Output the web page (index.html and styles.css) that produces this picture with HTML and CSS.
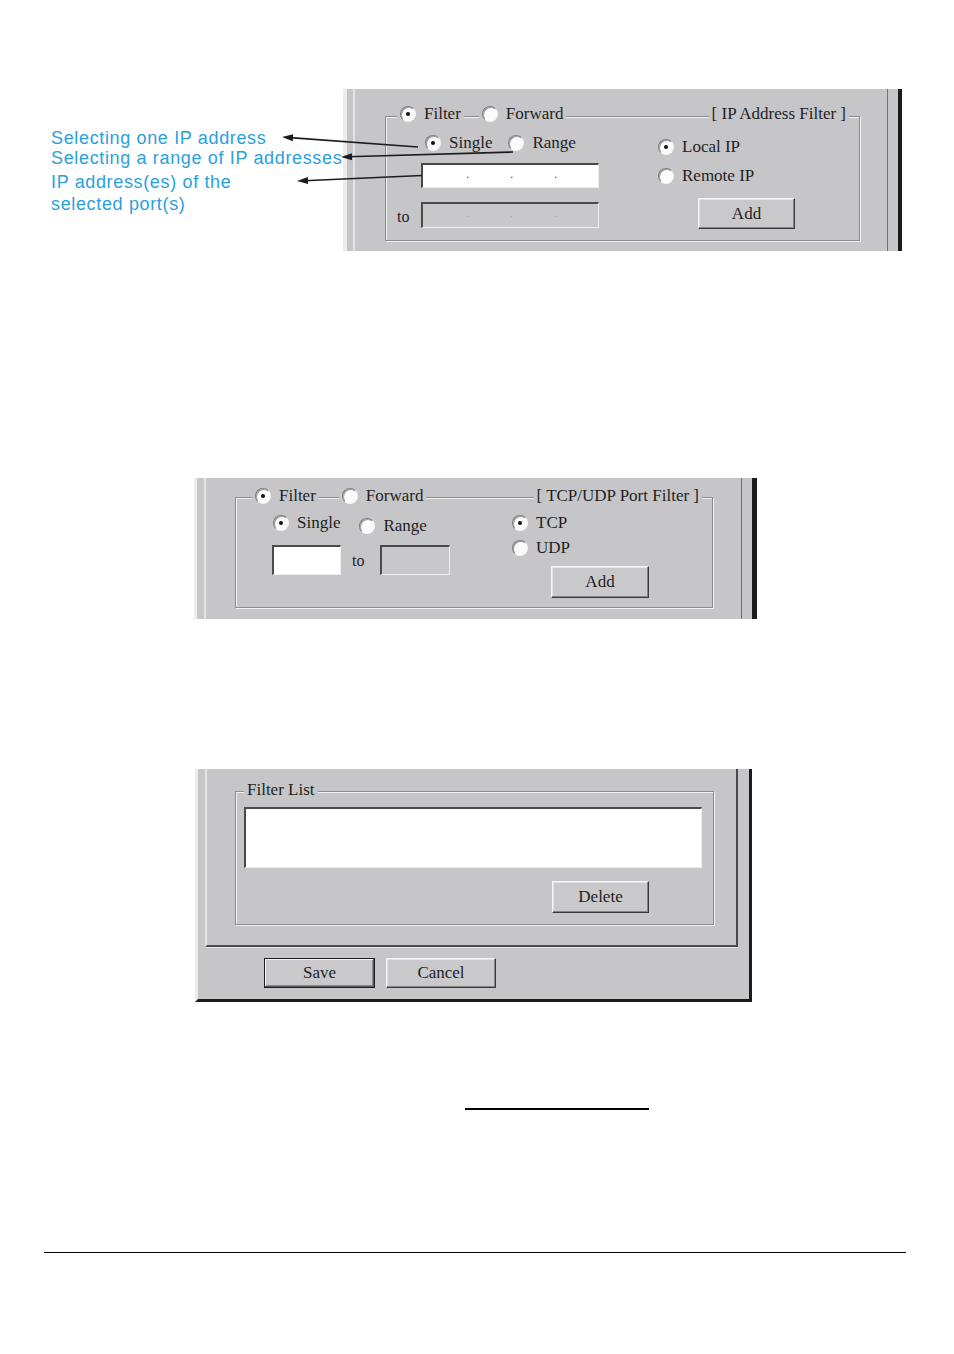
FILE: index.html
```html
<!DOCTYPE html>
<html>
<head>
<meta charset="utf-8">
<link rel="stylesheet" href="styles.css">
</head>
<body>
<div class="page">
  <svg class="arrows" width="954" height="260" viewBox="0 0 954 260">
    <line x1="418" y1="147" x2="290" y2="137.6" />
    <polygon points="282,137 293.2,134.3 292.7,141.3" />
    <line x1="513" y1="152" x2="348" y2="156.8" />
    <polygon points="341,157 352.1,160.2 351.9,153.2" />
    <line x1="422" y1="175.5" x2="304" y2="180.7" />
    <polygon points="297,181 308.1,184.1 307.9,177.1" />
  </svg>

  <section class="row1">
    <div class="notes">
      <p class="note">Selecting one IP address</p>
      <p class="note">Selecting a range of IP addresses</p>
      <p class="note note-multi">IP address(es) of the<br>selected port(s)</p>
    </div>
    <div class="shot shot1">
      <div class="panel panel1">
        <div class="gb gb1">
          <div class="gb-head">
            <span class="opt opt-first1"><i class="radio on"></i>Filter</span>
            <span class="opt opt-second1"><i class="radio"></i>Forward</span>
            <span class="gb-title">[ IP Address Filter ]</span>
          </div>
          <div class="gb-body">
            <div class="col-left1">
              <div class="line radios1">
                <span class="opt-in"><i class="radio on"></i>Single</span>
                <span class="opt-in range1"><i class="radio"></i>Range</span>
              </div>
              <div class="ipbox ip1"><span>.</span><span>.</span><span>.</span></div>
              <div class="torow1">
                <span class="tolabel1">to</span>
                <div class="ipbox ip2 disabled"><span>.</span><span>.</span><span>.</span></div>
              </div>
            </div>
            <div class="col-right1">
              <div class="line local"><span class="opt-in"><i class="radio on"></i>Local IP</span></div>
              <div class="line remote"><span class="opt-in"><i class="radio"></i>Remote IP</span></div>
              <div class="btn add1">Add</div>
            </div>
          </div>
        </div>
      </div>
    </div>
  </section>

  <section class="shot shot2">
    <div class="panel panel2">
      <div class="gb gb2">
        <div class="gb-head">
          <span class="opt opt-first2"><i class="radio on"></i>Filter</span>
          <span class="opt opt-second2"><i class="radio"></i>Forward</span>
          <span class="gb-title">[ TCP/UDP Port Filter ]</span>
        </div>
        <div class="gb-body">
          <div class="col-left2">
            <div class="line radios2">
              <span class="opt-in"><i class="radio on"></i>Single</span>
              <span class="opt-in range2"><i class="radio"></i>Range</span>
            </div>
            <div class="portrow">
              <div class="ipbox port1"></div>
              <span class="tolabel2">to</span>
              <div class="ipbox port2 disabled"></div>
            </div>
          </div>
          <div class="col-right2">
            <div class="line tcp"><span class="opt-in"><i class="radio on"></i>TCP</span></div>
            <div class="line udp"><span class="opt-in"><i class="radio"></i>UDP</span></div>
            <div class="btn add2">Add</div>
          </div>
        </div>
      </div>
    </div>
  </section>

  <section class="shot shot3">
    <div class="panel panel3">
      <div class="gb gb3">
        <div class="gb-head">
          <span class="gb-label">Filter List</span>
        </div>
        <div class="listbox"></div>
        <div class="btn delete">Delete</div>
      </div>
    </div>
    <div class="actions">
      <div class="btn save">Save</div>
      <div class="btn cancel">Cancel</div>
    </div>
  </section>

  <div class="rule-short"></div>
  <div class="rule-foot"></div>
</div>
</body>
</html>
```

FILE: styles.css
```css
* { box-sizing: border-box; }

html, body {
  margin: 0;
  padding: 0;
  background: #ffffff;
}

.page {
  position: relative;
  width: 954px;
  height: 1354px;
  padding-top: 89px;
  font-family: "Liberation Serif", "DejaVu Serif", serif;
  color: #1f1f1f;
}

.arrows {
  position: absolute;
  left: 0;
  top: 0;
  pointer-events: none;
  z-index: 5;
}
.arrows line { stroke: #1c1c1c; stroke-width: 1.6; }
.arrows polygon { fill: #1c1c1c; }

/* ---------- row 1 ---------- */
.row1 {
  display: flex;
  align-items: flex-start;
}

.notes {
  flex: 0 0 343px;
  padding-left: 51px;
  padding-top: 39px;
  font-family: "Liberation Sans", Arial, sans-serif;
  color: #2b9fdd;
  font-size: 18px;
  letter-spacing: 0.65px;
}
.note {
  margin: 0;
  line-height: 20px;
  white-space: nowrap;
}
.note-multi {
  margin-top: 3px;
  line-height: 22px;
}

/* ---------- common shot / window bits ---------- */
.shot {
  display: flex;
  background: #c6c6c8;
  font-size: 17px;
}

.panel {
  border-left: 2px solid #e4e4e6;
  border-right: 1px solid #707072;
}

.gb {
  border: 1px solid #8c8c8e;
  box-shadow: inset 1px 1px 0 #f2f2f2, 1px 1px 0 #f2f2f2;
}

.gb-head {
  display: flex;
  align-items: center;
  height: 20px;
}

.opt, .gb-title, .gb-label {
  display: flex;
  align-items: center;
  gap: 8px;
  background: #c6c6c8;
  padding: 0 3px;
  white-space: nowrap;
  line-height: 20px;
}
.gb-title {
  margin-left: auto;
  margin-right: 10px;
}

.gb-body { display: flex; }

.line {
  display: flex;
  align-items: center;
  height: 20px;
}
.opt-in {
  display: flex;
  align-items: center;
  gap: 8px;
  white-space: nowrap;
}

.radio {
  position: relative;
  display: block;
  flex: 0 0 auto;
  width: 16px;
  height: 16px;
  border-radius: 50%;
  background: #fbfbfb;
  border: 1px solid;
  border-color: #7c7c7e #f4f4f4 #f4f4f4 #7c7c7e;
  box-shadow: inset 1px 1px 0 #9e9ea0;
}
.radio.on::after {
  content: "";
  position: absolute;
  left: 5px;
  top: 5px;
  width: 4px;
  height: 4px;
  border-radius: 50%;
  background: #111;
}

.ipbox {
  display: flex;
  background: #ffffff;
  border-top: 2px solid #4a4a4c;
  border-left: 2px solid #4a4a4c;
  border-bottom: 1px solid #eeeeee;
  border-right: 1px solid #eeeeee;
  padding-left: 43px;
  font-size: 13px;
  line-height: 18px;
  color: #555;
}
.ipbox span { width: 44px; }
.ipbox.disabled { background: #c8c8ca; color: #a8a8aa; }

.btn {
  display: flex;
  align-items: center;
  justify-content: center;
  background: #c9c9cb;
  border: 1px solid;
  border-color: #f6f6f6 #3a3a3c #3a3a3c #f6f6f6;
  box-shadow: inset -1px -1px 0 #858587, inset 1px 1px 0 #e2e2e4;
  font-size: 17px;
  color: #1f1f1f;
}

/* ---------- shot 1 ---------- */
.shot1 {
  width: 559px;
  height: 162px;
  border-left: 4px solid #ececee;
  border-right: 4px solid #1c1c1c;
}
.panel1 {
  margin-left: 6px;
  width: 535px;
}
.gb1 {
  margin-left: 30px;
  margin-top: 27px;
  width: 475px;
  height: 125px;
}
.gb1 .gb-head { margin-top: -13px; }
.opt-first1 { margin-left: 11px; }
.opt-second1 { margin-left: 15px; }

.col-left1 { width: 262px; padding-left: 11px; }
.radios1 { margin-top: 9px; padding-left: 28px; }
.range1 { margin-left: 16px; }
.ip1 { margin-top: 10px; margin-left: 24px; width: 178px; height: 25px; }
.torow1 { display: flex; margin-top: 14px; }
.tolabel1 { width: 24px; padding-top: 5px; font-size: 16px; line-height: 20px; }
.ip2 { width: 178px; height: 26px; }

.col-right1 { padding-left: 10px; }
.local { margin-top: 13px; }
.remote { margin-top: 9px; }
.add1 { margin-top: 12px; margin-left: 40px; width: 97px; height: 31px; }

/* ---------- shot 2 ---------- */
.shot2 {
  margin-top: 227px;
  margin-left: 194px;
  width: 563px;
  height: 141px;
  border-left: 3px solid #ececee;
  border-right: 5px solid #1c1c1c;
}
.panel2 {
  margin-left: 7px;
  width: 538px;
}
.gb2 {
  margin-left: 29px;
  margin-top: 19px;
  width: 478px;
  height: 111px;
}
.gb2 .gb-head { margin-top: -12px; }
.opt-first2 { margin-left: 16px; }
.opt-second2 { margin-left: 20px; }

.col-left2 { width: 266px; padding-left: 37px; }
.radios2 { margin-top: 7px; }
.range2 { margin-left: 19px; margin-top: 6px; }
.portrow { display: flex; align-items: center; margin-top: 12px; margin-left: -1px; }
.port1 { width: 69px; height: 30px; }
.tolabel2 { margin-left: 11px; width: 14px; font-size: 16px; padding-top: 2px; }
.port2 { margin-left: 14px; width: 70px; height: 30px; }

.col-right2 { padding-left: 10px; }
.tcp { margin-top: 7px; }
.udp { margin-top: 5px; }
.add2 { margin-top: 8px; margin-left: 39px; width: 98px; height: 32px; }

/* ---------- shot 3 ---------- */
.shot3 {
  margin-top: 150px;
  margin-left: 195px;
  width: 557px;
  height: 233px;
  flex-direction: column;
  border-left: 3px solid #ececee;
  border-right: 3px solid #1c1c1c;
  border-bottom: 3px solid #1c1c1c;
}
.panel3 {
  margin-left: 7px;
  width: 533px;
  height: 178px;
  border-right: 2px solid #4a4a4c;
  border-bottom: 2px solid #4a4a4c;
  box-shadow: 0 1px 0 #e6e6e6;
}
.gb3 {
  margin-left: 28px;
  margin-top: 22px;
  width: 479px;
  height: 134px;
}
.gb3 .gb-head { margin-top: -12px; }
.gb-label { margin-left: 8px; }
.listbox {
  margin-top: 7px;
  margin-left: 8px;
  width: 458px;
  height: 61px;
  background: #ffffff;
  border-top: 2px solid #4a4a4c;
  border-left: 2px solid #4a4a4c;
  border-bottom: 1px solid #eeeeee;
  border-right: 1px solid #eeeeee;
}
.delete { margin-top: 13px; margin-left: 316px; width: 97px; height: 32px; }

.actions {
  display: flex;
  gap: 11px;
  margin-top: 11px;
  margin-left: 66px;
}
.save {
  width: 111px;
  height: 30px;
  border-color: #1e1e1e;
  box-shadow: inset -1px -1px 0 #5a5a5c, inset 1px 1px 0 #f2f2f2, inset -2px -2px 0 #8a8a8c;
}
.cancel { width: 110px; height: 30px; }

/* ---------- rules ---------- */
.rule-short {
  margin-top: 106px;
  margin-left: 465px;
  width: 184px;
  height: 2px;
  background: #000;
}
.rule-foot {
  margin-top: 142px;
  margin-left: 44px;
  width: 862px;
  height: 1px;
  background: #000;
}
```
